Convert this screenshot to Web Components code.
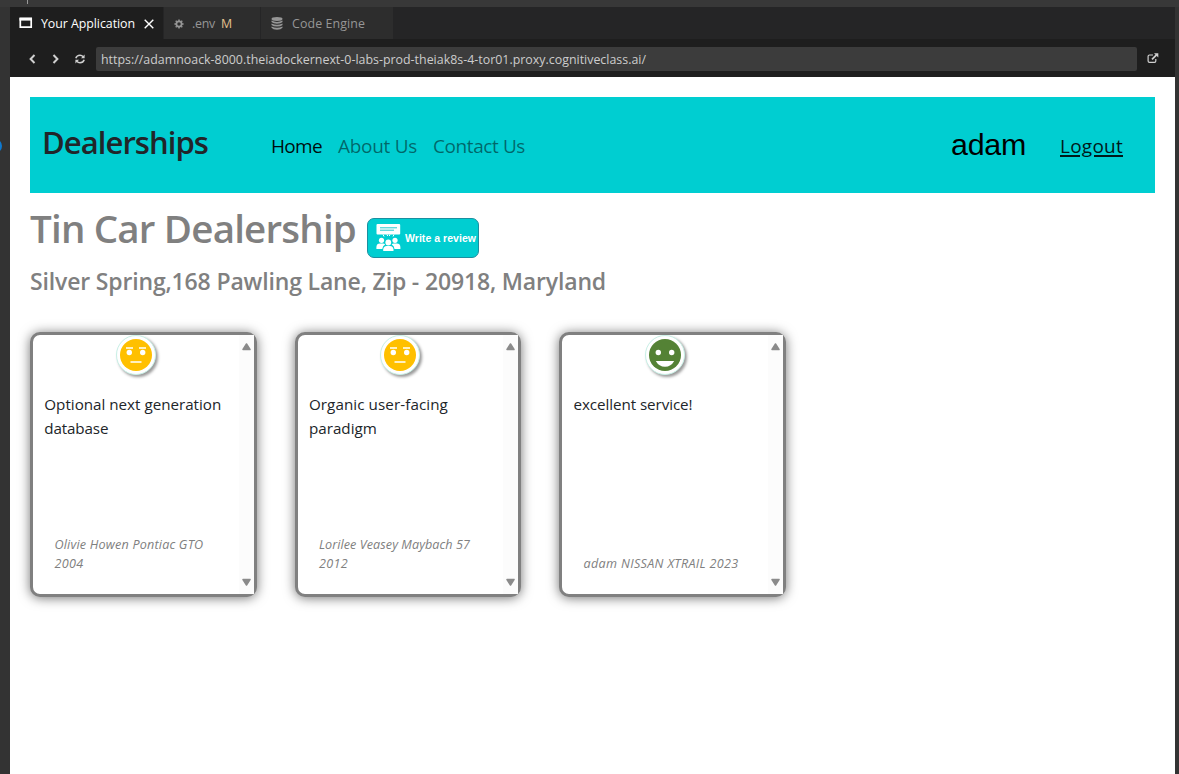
<!DOCTYPE html>
<html lang="en">
<head>
<meta charset="utf-8">
<title>Dealerships</title>
<style>
html,body{margin:0;height:100%;overflow:hidden;background:#333}
body{font-family:"Open Sans","Noto Sans",sans-serif}
</style>
</head>
<body>
<ide-window>
  <tab-strip slot="chrome"></tab-strip>
  <address-bar slot="chrome"></address-bar>
  <nav-header></nav-header>
  <dealer-heading></dealer-heading>
  <review-grid>
    <review-card mood="neutral">
      <fit-text w="177">Optional next generation</fit-text>
      <fit-text w="64">database</fit-text>
      <fit-text slot="by" w="149">Olivie Howen Pontiac GTO</fit-text>
      <fit-text slot="by" w="29">2004</fit-text>
    </review-card>
    <review-card mood="neutral">
      <fit-text w="139">Organic user-facing</fit-text>
      <fit-text w="68">paradigm</fit-text>
      <fit-text slot="by" w="151">Lorilee Veasey Maybach 57</fit-text>
      <fit-text slot="by" w="29">2012</fit-text>
    </review-card>
    <review-card mood="positive">
      <fit-text w="119">excellent service!</fit-text>
      <fit-text slot="by" w="155">adam NISSAN XTRAIL 2023</fit-text>
    </review-card>
  </review-grid>
</ide-window>
<script>
const define = (name, html, setup) => customElements.define(name, class extends HTMLElement {
  connectedCallback() {
    if (this.shadowRoot) return;
    this.attachShadow({mode: 'open'}).innerHTML = html;
    if (setup) setup(this, this.shadowRoot);
  }
});

define('ide-window', `
<style>
:host{display:flex;flex-direction:column;box-sizing:border-box;width:1179px;height:774px;padding:7px 4px 0 10px;background:linear-gradient(#383838 7px,#333 7px);position:relative;overflow:hidden}
main{flex:1;background:#fff;padding:20px 20px 0;display:flex;flex-direction:column;min-height:0}
.tick{position:absolute;left:27px;top:0;width:1px;height:4px;background:#999}
.dot{position:absolute;left:-12px;top:139px;width:14px;height:14px;border-radius:50%;background:#0e7ad1}
</style>
<span class="tick"></span><span class="dot"></span>
<slot name="chrome"></slot><main><slot></slot></main>`);

define('tab-strip', `
<style>
:host{display:flex;height:32px;background:#252526;font-size:12.4px;line-height:32px}
.tab{display:flex;align-items:center;box-sizing:border-box;background:#2d2d2d;color:#969696;border-right:1px solid #252526}
.active{background:#1e1e1e;color:#fff}
svg{display:block;flex:none}
fit-text{margin-top:2px}
</style>
<div class="tab active" style="width:154px;padding-left:9px">
  <svg width="14" height="12" viewBox="0 0 14 12"><path d="M1.300 1.500h10.900v8.700H1.300z" fill="none" stroke="#fff" stroke-width="1.700"/><path d="M.5.600h12.500v3H.5z" fill="#fff"/></svg>
  <fit-text w="94" style="margin-left:8px">Your Application</fit-text>
  <svg width="10" height="10" style="margin:2px 0 0 9px"><path d="M.7.7l8.6 8.6M9.3.7L.7 9.3" stroke="#fff" stroke-width="1.4"/></svg>
</div>
<div class="tab" style="width:97px;padding-left:10px">
  <svg width="10" height="10" viewBox="0 0 10 10" style="margin-top:2px"><circle cx="5" cy="5" r="2.6" fill="none" stroke="#969696" stroke-width="1.7"/><path d="M5 .4v1.600M5 8v1.600M.4 5H2M8 5h1.600M1.700 1.700l1.100 1.100M7.200 7.200l1.100 1.100M8.300 1.700L7.200 2.800M2.800 7.200L1.700 8.300" stroke="#969696" stroke-width="1.5"/></svg>
  <fit-text w="23" style="margin-left:8px">.env</fit-text>
  <fit-text w="11" style="margin-left:6px;color:#e2c08d">M</fit-text>
</div>
<div class="tab" style="width:133px;padding-left:10px">
  <svg width="12" height="13" viewBox="0 0 12 13"><g fill="#969696"><ellipse cx="6" cy="2" rx="5.5" ry="1.9"/><path d="M.5 3.6Q6 6.2 11.5 3.6V5Q10 6.7 6 6.7T.5 5zM.5 6.5Q6 9.1 11.5 6.5v1.4Q10 9.6 6 9.6T.5 7.9zM.5 9.4Q6 12 11.5 9.4v1.4Q10 12.7 6 12.7T.5 10.8z"/></g></svg>
  <fit-text w="73" style="margin-left:9px">Code Engine</fit-text>
</div>`);

define('address-bar', `
<style>
:host{display:flex;align-items:center;box-sizing:border-box;height:38px;background:#1e1e1e;padding:2px 0 0 19px}
svg{display:block;flex:none;fill:none;stroke:#d0d0d0}
.url{box-sizing:border-box;width:1041px;height:24px;margin-left:11px;padding:1px 0 0 5px;background:#3c3c3c;border-radius:2px;color:#ccc;font-size:12.4px;line-height:24px}
</style>
<svg width="7" height="10"><path d="M5.5 1L1.6 5l3.900 4" stroke-width="2"/></svg>
<svg width="7" height="10" style="margin-left:16px"><path d="M1.500 1l3.900 4-3.900 4" stroke-width="2"/></svg>
<svg width="10" height="10" viewBox="0 0 10 10" style="margin-left:16px"><path d="M.8 4.2Q1.8 1.2 5 1.2q1.8 0 3.3 1.5M9.2 5.8Q8.200 8.800 5 8.800q-1.800 0-3.300-1.500" stroke-width="1.5"/><path d="M9.600.5v3.700H6zM.4 9.500V5.800H4z" fill="#d0d0d0" stroke="none"/></svg>
<div class="url"><fit-text w="545">https://adamnoack-8000.theiadockernext-0-labs-prod-theiak8s-4-tor01.proxy.cognitiveclass.ai/</fit-text></div>
<svg width="12" height="11" viewBox="0 0 12 11" style="margin:0 0 1px 10px"><path d="M6 2H2.500Q1.100 2 1.100 3.200v4.800Q1.100 9.300 2.500 9.300h5Q8.800 9.300 8.800 8V6" stroke-width="1.200"/><path d="M5 6.300L9.500 1.800" stroke-width="1.700"/><path d="M7 .2h4.300v4.300z" fill="#d0d0d0" stroke="none"/></svg>`);

define('nav-header', `
<style>
:host{display:flex;box-sizing:border-box;width:1125px;height:96px;padding:0 32px 0 12px;background:darkturquoise;align-items:flex-start}
.brand{font-size:31px;font-weight:600;line-height:40px;color:#212529;margin-top:25px}
.link{font-size:19px;line-height:30px;margin-top:34px;color:rgba(0,0,0,.5)}
.home{color:rgba(0,0,0,.95)}
.user{font:30.4px/40px "Liberation Sans",sans-serif;color:#000;margin:27px 34px 0 auto}
.logout{color:#00191a;text-decoration:underline;text-decoration-thickness:2px;text-underline-offset:2px;text-decoration-skip-ink:auto}
</style>
<fit-text class="brand" w="166">Dealerships</fit-text>
<fit-text class="link home" w="51" style="margin-left:63px">Home</fit-text>
<fit-text class="link" w="79" style="margin-left:16px">About Us</fit-text>
<fit-text class="link" w="92" style="margin-left:16px">Contact Us</fit-text>
<fit-text class="user" w="75">adam</fit-text>
<fit-text class="link logout" w="63">Logout</fit-text>`);

define('dealer-heading', `
<style>
:host{display:block;color:grey;font-weight:600}
.row{display:flex;height:65px}
.name{font-size:38.500px;line-height:48px;margin-top:11px}
.addr{font-size:23px;line-height:30px;margin-top:8px}
review-button{margin:25px 0 0 11px}
</style>
<div class="row"><fit-text class="name" w="326">Tin Car Dealership</fit-text><review-button></review-button></div>
<fit-text class="addr" w="576">Silver Spring,168 Pawling Lane, Zip - 20918, Maryland</fit-text>`);

define('review-button', `
<style>
:host{display:flex;align-items:center;box-sizing:border-box;width:112px;height:40px;padding-left:8px;border:1px solid #1b8fa0;border-radius:7px;background:darkturquoise;color:#fff;font:bold 10.500px/14px "Liberation Sans",sans-serif}
svg{display:block;flex:none;margin-right:4px}
</style>
<svg width="25" height="28" viewBox="0 0 25 28" fill="#fff"><path d="M1.500 0h21.700q1 0 1 1v8.500q0 1-1 1H1.500q-1 0-1-1V1q0-1 1-1z"/><path d="M4 3.800h17M4 6.200h14" stroke="#27c8ce" stroke-width="1"/><path d="M7 10.500l1 2M11 10.500l.7 1.500M14 10.500l-.7 1.500M18 10.500l-1 2" stroke="#fff"/><circle cx="5.500" cy="16.300" r="2.600"/><circle cx="19" cy="16.300" r="2.600"/><path d="M.4 25v-2Q.6 19.600 4 19.600h3.200q1.300 0 1.900 1Q6.600 22 6.300 25zM24.400 25v-2q-.2-3.400-3.600-3.400h-3.200q-1.300 0-1.900 1 2.500 1.400 2.800 4.400z"/><circle cx="12.300" cy="18.500" r="2.900"/><path d="M7.200 27v-1.500Q7.500 22 10.700 22H14q3.200 0 3.500 3.500V27z"/></svg>
<fit-text w="71">Write a review</fit-text>`);

define('review-grid', `<style>:host{display:flex;gap:38px;margin-top:36px}</style><slot></slot>`);

define('review-card', `
<style>
:host{display:flex;box-sizing:border-box;width:226.600px;height:265px;border:3px solid grey;border-radius:10px;background:#fff;box-shadow:0 1px 12px rgba(0,0,0,.55)}
.body{flex:1;display:flex;flex-direction:column;align-items:flex-start;min-width:0}
.face{align-self:center;width:40px;height:40px;box-sizing:border-box;border-radius:50%;background:#fff;border:1px solid #c8f0e6;box-shadow:2px 2px 3px rgba(0,0,0,.4);display:grid;place-items:center}
svg{display:block}
.text{margin:17px 0 0 11.300px;font-size:15.200px;line-height:24px;color:#212529}
.by{margin:auto 0 21px 21.400px;font-size:12.600px;line-height:19px;font-style:italic;color:grey}
.text,.by{display:flex;flex-direction:column;align-items:flex-start}
.bar{width:15px;background:#fcfcfc;display:flex;flex-direction:column;align-items:center;justify-content:space-between;padding:8px 0;box-sizing:border-box}
</style>
<div class="body">
  <div class="face"></div>
  <div class="text"><slot></slot></div>
  <div class="by"><slot name="by"></slot></div>
</div>
<div class="bar">
  <svg width="9" height="8"><path d="M4.500 1L8 6.500H1z" fill="#8b8b8b" stroke="#8b8b8b" stroke-linejoin="round" stroke-width="1.500"/></svg>
  <svg width="9" height="8"><path d="M4.500 7L8 1.500H1z" fill="#8b8b8b" stroke="#8b8b8b" stroke-linejoin="round" stroke-width="1.500"/></svg>
</div>`, (host, root) => {
  const happy = host.getAttribute('mood') === 'positive';
  root.querySelector('.face').innerHTML = `<svg width="32" height="32" viewBox="0 0 32 32"><circle cx="16" cy="16" r="16" fill="${happy ? '#548235' : '#ffc000'}"/><circle cx="9.300" cy="13.500" r="2.700" fill="#fff"/><circle cx="22.700" cy="13.500" r="2.700" fill="#fff"/>${happy ? '<path d="M6.800 22h18.400Q22 27.800 16 27.800T6.800 22z" fill="#fff"/>' : '<path d="M6 9h7M19 9h7M10.500 23h11" stroke="#fff" stroke-width="1.700"/>'}</svg>`;
});

/* One line of text whose tracking is adjusted to fill the width in "w". */
define('fit-text', `
<style>:host{display:block;flex:none;white-space:nowrap}span{display:inline-block;text-decoration:inherit}</style>
<span><slot></slot></span>`, (host, root) => {
  const w = +host.getAttribute('w'), n = host.textContent.trim().length;
  host.style.width = w + 'px';
  requestAnimationFrame(() => {
    const natural = root.querySelector('span').getBoundingClientRect().width;
    host.style.letterSpacing = ((w - natural) / n) + 'px';
  });
});
</script>
</body>
</html>
